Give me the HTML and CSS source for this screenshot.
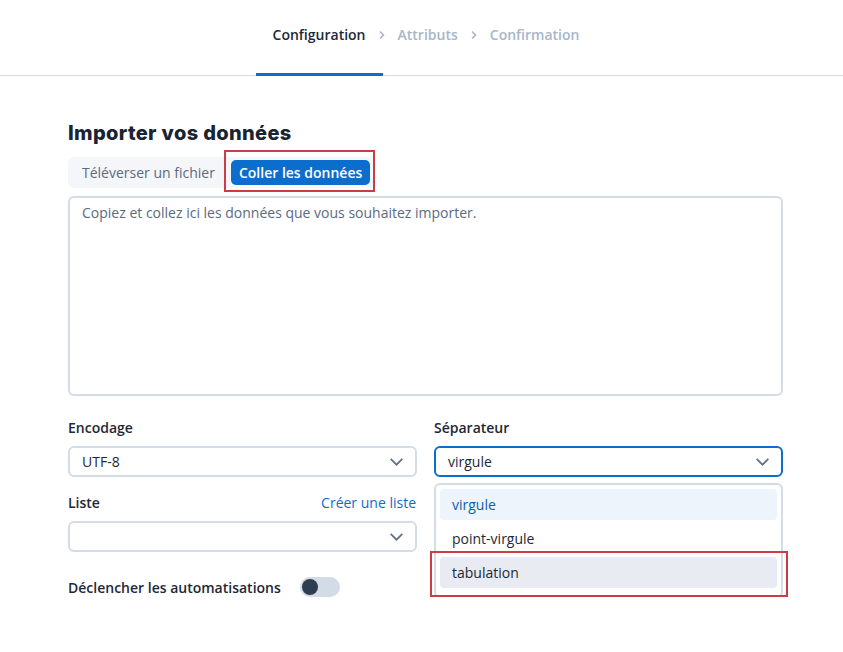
FILE: index.html
```html
<!DOCTYPE html>
<html>
<head>
    <title>Importer vos données</title>
    <link rel="stylesheet" href="styles.css">
</head>
<body>
    <nav class="steps">
        <span class="step active">Configuration</span>
        <svg class="chev" viewBox="0 0 8 10"><path d="M2 1.5 5.5 5 2 8.5"/></svg>
        <span class="step">Attributs</span>
        <svg class="chev" viewBox="0 0 8 10"><path d="M2 1.5 5.5 5 2 8.5"/></svg>
        <span class="step">Confirmation</span>
    </nav>

    <main class="page">
        <h1>Importer vos données</h1>

        <div class="tabs">
            <button class="tab">Téléverser un fichier</button>
            <button class="tab selected">Coller les données</button>
        </div>

        <textarea class="paste" placeholder="Copiez et collez ici les données que vous souhaitez importer."></textarea>

        <div class="fields">
            <div class="field">
                <div class="label-row"><label>Encodage</label></div>
                <div class="select">
                    <span>UTF-8</span>
                    <svg class="caret" viewBox="0 0 16 16"><path d="M2.5 5.5 8 11l5.5-5.5"/></svg>
                </div>
            </div>

            <div class="field">
                <div class="label-row"><label>Séparateur</label></div>
                <div class="select open">
                    <span>virgule</span>
                    <svg class="caret" viewBox="0 0 16 16"><path d="M2.5 5.5 8 11l5.5-5.5"/></svg>
                </div>
                <ul class="menu">
                    <li class="current">virgule</li>
                    <li>point-virgule</li>
                    <li class="hover">tabulation</li>
                </ul>
            </div>

            <div class="field">
                <div class="label-row">
                    <label>Liste</label>
                    <a href="#" class="link">Créer une liste</a>
                </div>
                <div class="select">
                    <span></span>
                    <svg class="caret" viewBox="0 0 16 16"><path d="M2.5 5.5 8 11l5.5-5.5"/></svg>
                </div>
            </div>
        </div>

        <div class="toggle-row">
            <span>Déclencher les automatisations</span>
            <span class="switch"><span class="knob"></span></span>
        </div>
    </main>
</body>
</html>
```

FILE: styles.css
```css
body {
    margin: 0;
    background: #ffffff;
    font-family: "Open Sans", "Lato", sans-serif;
    font-size: 14px;
    color: #1e2836;
}

.steps {
    height: 75px;
    border-bottom: 1px solid #d5dde8;
    display: flex;
    justify-content: center;
    align-items: stretch;
    padding-left: 9px;
}

.step {
    display: flex;
    align-items: flex-start;
    padding: 25px 12px 0;
    font-weight: 600;
    color: #a7b6c8;
    border-bottom: 3px solid transparent;
    margin-bottom: -1px;
}

.step.active {
    color: #1e2836;
    border-bottom-color: #0b6dcc;
    padding: 25px 17px 0;
    margin: 0 -5px -1px;
}

.chev {
    width: 8px;
    height: 10px;
    margin-top: 30px;
    fill: none;
    stroke: #a7b6c8;
    stroke-width: 1.6;
}

.page {
    width: 715px;
    margin-left: 68px;
    padding-top: 45px;
}

h1 {
    margin: 0 0 12px;
    font-size: 20px;
    font-weight: 800;
    font-family: "Inter", "Open Sans", sans-serif;
    color: #1a2331;
    letter-spacing: 0.35px;
}

.tabs {
    display: inline-flex;
    align-items: center;
    gap: 4px;
    background: #f4f6f9;
    border-radius: 6px;
    padding: 3px 4px 3px 3px;
    height: 25px;
}

.tab {
    border: none;
    background: transparent;
    font-family: inherit;
    font-size: 14px;
    color: #5c6b7e;
    height: 25px;
    padding: 0 12px 0 11px;
    border-radius: 5px;
    cursor: pointer;
}

.tab.selected {
    position: relative;
    background: #0b6dcc;
    color: #ffffff;
    font-weight: 600;
    padding: 0 8px;
}

.tab.selected::after {
    content: "";
    position: absolute;
    left: -7px;
    right: -5px;
    top: -10px;
    bottom: -7px;
    border: 2px solid #cd3b47;
}

.paste {
    display: block;
    box-sizing: border-box;
    width: 100%;
    height: 200px;
    margin-top: 8px;
    border: 2px solid #d3dce7;
    border-radius: 6px;
    padding: 5px 12px;
    font-family: inherit;
    font-size: 14px;
    resize: none;
    outline: none;
}

.paste::placeholder {
    color: #5a6a80;
}

.fields {
    display: grid;
    grid-template-columns: 1fr 1fr;
    column-gap: 17px;
    row-gap: 15px;
    margin-top: 21px;
}

.field {
    position: relative;
}

.label-row {
    display: flex;
    justify-content: space-between;
    align-items: center;
    height: 20px;
    margin-bottom: 9px;
    font-weight: 600;
}

.link {
    color: #0b6dcc;
    font-weight: 400;
    text-decoration: none;
    margin-right: 1px;
}

.select {
    box-sizing: border-box;
    height: 31px;
    border: 2px solid #d3dce7;
    border-radius: 6px;
    display: flex;
    align-items: center;
    justify-content: space-between;
    padding: 0 10px 0 12px;
    color: #1e2836;
}

.select.open {
    border-color: #0b6dcc;
}

.caret {
    width: 17px;
    height: 17px;
    fill: none;
    stroke: #5f6f84;
    stroke-width: 1.6;
}

.menu {
    position: absolute;
    left: 0;
    right: 0;
    top: 66px;
    margin: 0;
    padding: 4px 4px 8px;
    list-style: none;
    background: #ffffff;
    border: 2px solid #d3dce7;
    border-radius: 6px;
    z-index: 2;
}

.menu li {
    height: 31px;
    line-height: 31px;
    padding: 0 12px;
    border-radius: 4px;
    margin-bottom: 3px;
}

.menu li.current {
    background: #edf4fc;
    color: #0b5fb3;
}

.menu li.hover {
    position: relative;
    background: #e8ebf1;
    margin-bottom: 0;
}

.menu li.hover::after {
    content: "";
    position: absolute;
    left: -10px;
    right: -11px;
    top: -6px;
    bottom: -9px;
    border: 2px solid #cd3b47;
}

.toggle-row {
    display: flex;
    align-items: center;
    gap: 19px;
    margin-top: 25px;
    font-weight: 600;
}

.switch {
    width: 40px;
    height: 20px;
    border-radius: 10px;
    background: #d3dbe6;
    position: relative;
}

.knob {
    position: absolute;
    left: 2px;
    top: 2px;
    width: 16px;
    height: 16px;
    border-radius: 50%;
    background: #2f3d50;
}
```
